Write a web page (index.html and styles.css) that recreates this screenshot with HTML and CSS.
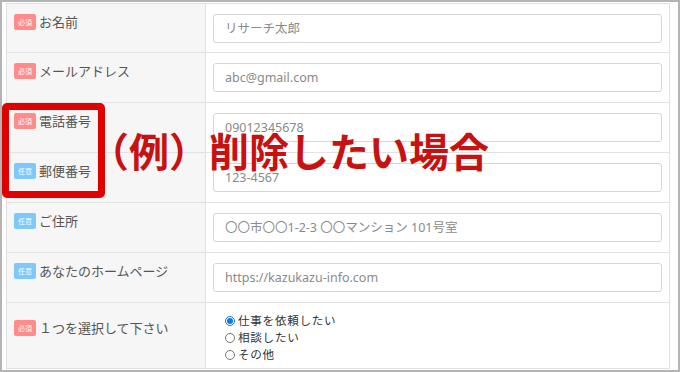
FILE: index.html
```html
<!DOCTYPE html>
<html lang="ja">
<head>
    <meta charset="UTF-8">
    <meta name="viewport" content="width=device-width, initial-scale=1.0">
    <title>お問い合わせフォーム</title>
    <link rel="stylesheet" href="styles.css">
</head>
<body>
    <div class="frame">
        <div class="form-table">
            <div class="row first">
                <div class="label"><span class="badge required">必須</span>お名前</div>
                <div class="field"><input type="text" placeholder="リサーチ太郎"></div>
            </div>
            <div class="row">
                <div class="label"><span class="badge required">必須</span>メールアドレス</div>
                <div class="field"><input type="text" placeholder="abc@gmail.com"></div>
            </div>
            <div class="row">
                <div class="label"><span class="badge required">必須</span>電話番号</div>
                <div class="field"><input type="text" placeholder="09012345678"></div>
            </div>
            <div class="row">
                <div class="label"><span class="badge optional">任意</span>郵便番号</div>
                <div class="field"><input type="text" placeholder="123-4567"></div>
            </div>
            <div class="row">
                <div class="label"><span class="badge optional">任意</span>ご住所</div>
                <div class="field"><input type="text" placeholder="〇〇市〇〇1-2-3 〇〇マンション 101号室"></div>
            </div>
            <div class="row">
                <div class="label"><span class="badge optional">任意</span>あなたのホームページ</div>
                <div class="field"><input type="text" placeholder="https://kazukazu-info.com"></div>
            </div>
            <div class="row last">
                <div class="label label-mid"><span class="badge required">必須</span>１つを選択して下さい</div>
                <div class="field radios">
                    <label><input type="radio" name="kind" checked>仕事を依頼したい</label>
                    <label><input type="radio" name="kind">相談したい</label>
                    <label><input type="radio" name="kind">その他</label>
                </div>
            </div>
        </div>

        <!-- annotation over the form -->
        <div class="mark-box"></div>
        <div class="mark-text">（例）削除したい場合</div>
    </div>
</body>
</html>
```

FILE: styles.css
```css
* {
    box-sizing: border-box;
}

body {
    margin: 0;
    font-family: "Noto Sans", "Noto Sans CJK JP", sans-serif;
    background: #fff;
}

.frame {
    position: relative;
    width: 680px;
    height: 372px;
    border: 2px solid #b4b4b4;
    padding: 1px 8px 2px 4px;
    overflow: hidden;
}

.form-table {
    border: 1px solid #e0e0e0;
    border-bottom: none;
}

.row {
    display: grid;
    grid-template-columns: 199px 1fr;
    height: 50px;
    border-bottom: 1px solid #e2e2e2;
}

.row.first {
    height: 49px;
}

.row.last {
    height: 66px;
}

.label {
    display: flex;
    align-items: flex-start;
    gap: 3px;
    padding: 9px 0 0 7px;
    background: #f6f6f6;
    border-right: 1px solid #e0e0e0;
    font-family: "Noto Sans CJK JP", sans-serif;
    font-size: 13px;
    line-height: 18px;
    color: #555;
}

.label-mid {
    padding-top: 16px;
}

.badge {
    display: inline-flex;
    align-items: center;
    justify-content: center;
    width: 22px;
    height: 16px;
    margin-top: 1px;
    border-radius: 2px;
    font-size: 7px;
    line-height: 1;
    color: #fff;
}

.badge.required {
    background: #ff8b8b;
}

.badge.optional {
    background: #7ec9fa;
}

.field {
    padding: 10px 7px 0 7px;
}

.field input[type="text"] {
    width: 100%;
    height: 29px;
    padding: 0 11px;
    border: 1px solid #d6d6d6;
    border-radius: 3px;
    background: #fff;
    font-family: "Noto Sans", "Noto Sans CJK JP", sans-serif;
    font-size: 12.5px;
    outline: none;
}

.field input::placeholder {
    color: #8a8a8a;
}

.radios {
    display: flex;
    flex-direction: column;
    padding: 9px 0 0 19px;
}

.radios label {
    display: flex;
    align-items: center;
    height: 17px;
    font-family: "Noto Sans CJK JP", sans-serif;
    font-size: 11.6px;
    letter-spacing: 0.7px;
    line-height: 17px;
    color: #333;
}

.radios input {
    width: 10px;
    height: 10px;
    margin: 0 3px 0 0;
    accent-color: #0a78e6;
}

.mark-box {
    position: absolute;
    left: 0;
    top: 101px;
    width: 103px;
    height: 95px;
    border: 7px solid #e00000;
    border-radius: 5px;
}

.mark-text {
    position: absolute;
    left: 87px;
    top: 128px;
    font-family: "Noto Sans CJK JP", sans-serif;
    font-weight: 700;
    font-size: 40px;
    line-height: 1;
    color: #c81212;
    white-space: nowrap;
}
```
